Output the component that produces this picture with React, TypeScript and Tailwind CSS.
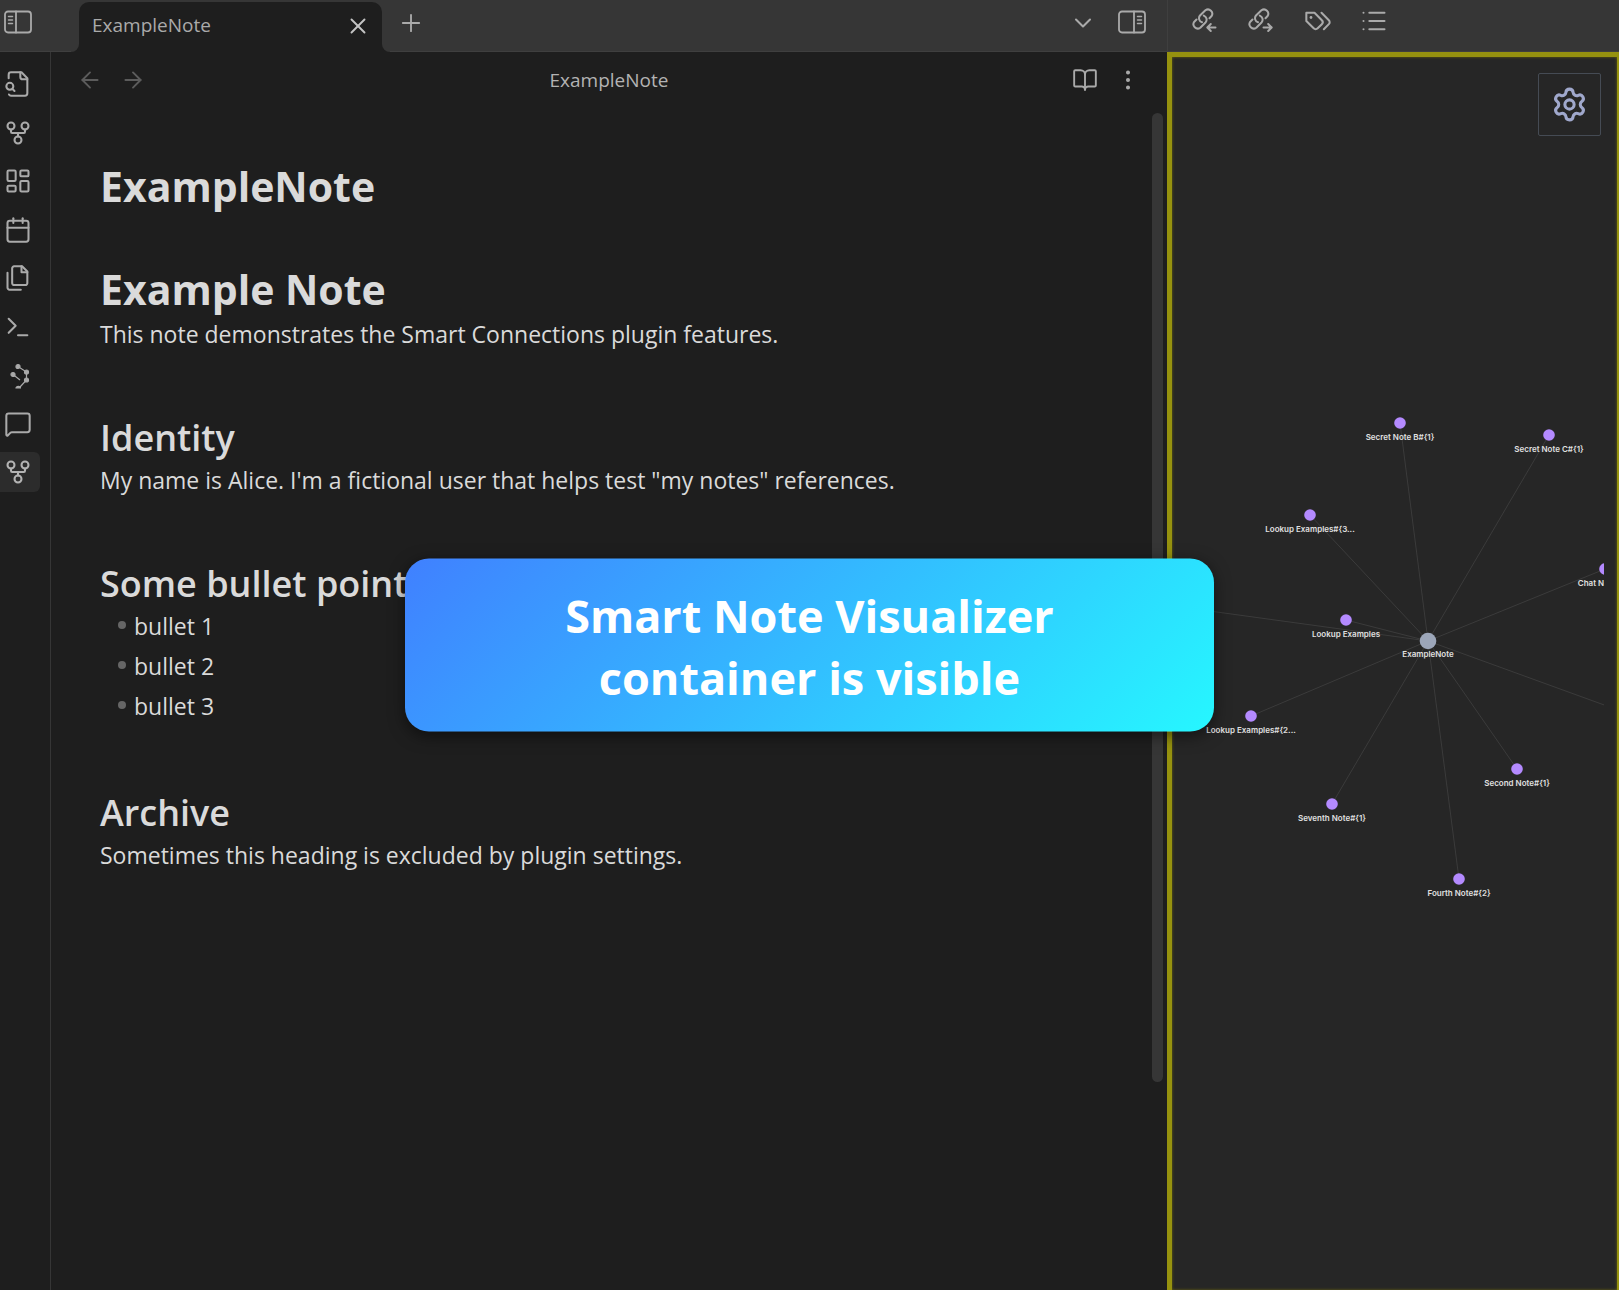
import React from "react";
import {
  ArrowLeft,
  ArrowRight,
  BookOpen,
  Calendar,
  ChevronDown,
  EllipsisVertical,
  GitFork,
  LayoutDashboard,
  List,
  MessageSquare,
  Plus,
  Settings,
  Terminal,
  X,
} from "lucide-react";

type SvgProps = { children: React.ReactNode; size?: number; viewBox?: string; strokeWidth?: number };

function Glyph({ children, size = 28, viewBox = "0 0 24 24", strokeWidth = 1.75 }: SvgProps) {
  return (
    <svg
      width={size}
      height={size}
      viewBox={viewBox}
      fill="none"
      stroke="currentColor"
      strokeWidth={strokeWidth}
      strokeLinecap="round"
      strokeLinejoin="round"
      aria-hidden="true"
    >
      {children}
    </svg>
  );
}

function FileSearchIcon() {
  return (
    <Glyph>
      <path d="M14 2v4a2 2 0 0 0 2 2h4" />
      <path d="M4.27 21a2 2 0 0 0 1.73 1H18a2 2 0 0 0 2-2V7l-5-5H6a2 2 0 0 0-2 2v3" />
      <circle cx="5" cy="14" r="3" />
      <path d="m9 18-1.5-1.5" />
    </Glyph>
  );
}

function FilesIcon() {
  return (
    <Glyph>
      <path d="M15.5 2H8.6c-.4 0-.8.2-1.1.5-.3.3-.5.7-.5 1.1v12.8c0 .4.2.8.5 1.1.3.3.7.5 1.1.5h9.8c.4 0 .8-.2 1.1-.5.3-.3.5-.7.5-1.1V6.5L15.5 2z" />
      <path d="M3 7.6v12.8c0 .4.2.8.5 1.1.3.3.7.5 1.1.5h9.8" />
      <path d="M15 2v5h5" />
    </Glyph>
  );
}

function SmartGraphIcon() {
  return (
    <svg width={28} height={28} viewBox="0 -1 28 28" fill="currentColor" stroke="currentColor" strokeWidth={1.2} aria-hidden="true">
      <path d="M14 4.500 22.500 10V18L16 25M9 12.500l7 5.500" fill="none" />
      <circle cx="14" cy="4.500" r="2" />
      <circle cx="22.500" cy="10" r="2" />
      <circle cx="22.500" cy="18" r="2" />
      <circle cx="9" cy="12.500" r="2" />
      <path d="M12 26a2.200 1.600 0 0 1 4.400 0z" />
    </svg>
  );
}

function SidebarIcon({ side }: { side: "left" | "right" }) {
  const divider = side === "left" ? 12 : 16;
  const lines = side === "left" ? "M4.500 6.500h4M4.500 10h4M4.500 13.500h4" : "M19.500 6.500h4M19.500 10h4M19.500 13.500h4";
  return (
    <svg width={28} height={24} viewBox="0 0 28 24" fill="none" stroke="currentColor" strokeWidth={1.8} strokeLinecap="round" aria-hidden="true">
      <rect x="1" y="1.500" width="26" height="21" rx="3" />
      <path d={`M${divider} 1.500v21`} />
      <path d={lines} strokeWidth={1.5} />
    </svg>
  );
}

function LinkIcon({ dir }: { dir: "in" | "out" }) {
  return (
    <Glyph viewBox="7 7 28 28" strokeWidth={2}>
      <path d="M17 22.300A4.300 4.300 0 0 1 15 15.500L20.400 10.300A4.300 4.300 0 0 1 26.400 16.300L24.500 18.200" />
      <path d="M11.500 19.500L9.300 21.700A4.300 4.300 0 0 0 15.300 27.700L20.500 22.500A4.300 4.300 0 0 0 18.800 15.600" />
      {dir === "in" ? <path d="M30.500 27.500H22.500M25.800 24l-3.500 3.500 3.500 3.500" /> : <path d="M22.500 27.500H30.500M27.200 24l3.500 3.500-3.500 3.500" />}
    </Glyph>
  );
}

function TagsIcon() {
  return (
    <Glyph>
      <path d="M9 5H2v7l6.290 6.290c.94.94 2.480.94 3.420 0l3.580-3.580c.94-.94.94-2.480 0-3.420L9 5Z" />
      <path d="M6 9.010V9" strokeWidth={2.4} />
      <path d="m15 5 6.300 6.300a2.400 2.400 0 0 1 0 3.400L17 19" />
    </Glyph>
  );
}

type IconButtonProps = { label: string; className: string; children: React.ReactNode };

function IconButton({ label, className, children }: IconButtonProps) {
  return (
    <button type="button" aria-label={label} className={`flex items-center justify-center ${className}`}>
      {children}
    </button>
  );
}

const ribbonItems = [
  { label: "Search files", icon: <FileSearchIcon /> },
  { label: "Open graph view", icon: <GitFork size={28} strokeWidth={1.75} /> },
  { label: "Create canvas", icon: <LayoutDashboard size={28} strokeWidth={1.75} /> },
  { label: "Open daily note", icon: <Calendar size={28} strokeWidth={1.75} /> },
  { label: "Insert template", icon: <FilesIcon /> },
  { label: "Command palette", icon: <Terminal size={28} strokeWidth={1.75} /> },
  { label: "Smart connections", icon: <SmartGraphIcon /> },
  { label: "Smart chat", icon: <MessageSquare size={28} strokeWidth={1.75} /> },
  { label: "Smart visualizer", icon: <GitFork size={28} strokeWidth={1.75} />, active: true },
];

function Ribbon() {
  return (
    <nav aria-label="Ribbon" className="w-[51px] shrink-0 border-r border-[#363636] pt-3">
      <div className="flex h-[428px] flex-col justify-between">
        {ribbonItems.map((item, i) => (
          <IconButton
            key={i}
            label={item.label}
            className={item.active ? "h-10 w-10 rounded-r-md bg-[#2c2c2c] pr-[5px] text-[#b3b3b3]" : "h-10 w-10 pr-[5px]"}
          >
            {item.icon}
          </IconButton>
        ))}
      </div>
    </nav>
  );
}

function TopBar() {
  return (
    <header className="flex h-[52px] shrink-0 border-b border-[#3f3f3f] bg-[#363636]">
      <div className="flex min-w-0 flex-1 items-center">
        <IconButton label="Toggle left sidebar" className="mb-2 ml-1 h-7 w-7">
          <SidebarIcon side="left" />
        </IconButton>
        <div className="relative -mb-px ml-[47px] mt-[2px] flex h-[50px] w-[303px] items-center justify-between self-start rounded-t-[10px] bg-[#1e1e1e] pl-[13px] pr-[11px]">
          <span className="pb-1 text-[19px] leading-7">ExampleNote</span>
          <IconButton label="Close tab" className="mb-[2px] h-[26px] w-[26px]">
            <X size={26} strokeWidth={1.75} className="text-[#c4c4c4]" />
          </IconButton>
          <span className="absolute bottom-0 right-full h-2 w-2 bg-[#1e1e1e]">
            <span className="block h-2 w-2 rounded-br-lg bg-[#363636]" />
          </span>
          <span className="absolute bottom-0 left-full h-2 w-2 bg-[#1e1e1e]">
            <span className="block h-2 w-2 rounded-bl-lg bg-[#363636]" />
          </span>
        </div>
        <IconButton label="New tab" className="mb-[6px] ml-[15px] h-7 w-7">
          <Plus size={28} strokeWidth={1.6} />
        </IconButton>
        <IconButton label="Tab list" className="mb-[6px] ml-auto h-7 w-7">
          <ChevronDown size={28} strokeWidth={1.75} />
        </IconButton>
        <IconButton label="Toggle right sidebar" className="mb-2 ml-[21px] mr-[21px] h-7 w-7">
          <SidebarIcon side="right" />
        </IconButton>
      </div>
      <div className="flex w-[452px] shrink-0 items-center gap-7 border-l border-[#3f3f3f] pb-[9px] pl-6">
        <IconButton label="Backlinks" className="h-7 w-7">
          <LinkIcon dir="in" />
        </IconButton>
        <IconButton label="Outgoing links" className="h-7 w-7">
          <LinkIcon dir="out" />
        </IconButton>
        <IconButton label="Tags" className="h-7 w-7">
          <TagsIcon />
        </IconButton>
        <IconButton label="Outline" className="h-7 w-7">
          <List size={28} strokeWidth={1.75} />
        </IconButton>
      </div>
    </header>
  );
}

function Editor() {
  const h1 = "text-[41px] font-bold leading-[50px]";
  const h2 = "mt-[62px] text-[36px] font-semibold leading-[44px]";
  return (
    <main className="relative min-w-0 flex-1 text-[#dadada]">
      <div className="grid h-14 grid-cols-3 items-center text-[#b3b3b3]">
        <div className="flex gap-[15px] pl-[25px] text-[#5c5c5c]">
          <IconButton label="Back" className="h-7 w-7">
            <ArrowLeft size={26} strokeWidth={1.75} />
          </IconButton>
          <IconButton label="Forward" className="h-7 w-7">
            <ArrowRight size={26} strokeWidth={1.75} />
          </IconButton>
        </div>
        <span className="text-center text-[19px] leading-7">ExampleNote</span>
        <div className="flex justify-end gap-[15px] pr-[25px] text-[#aaaaaa]">
          <IconButton label="Reading view" className="h-7 w-7">
            <BookOpen size={26} strokeWidth={1.75} />
          </IconButton>
          <IconButton label="More options" className="h-7 w-7">
            <EllipsisVertical size={26} strokeWidth={1.75} />
          </IconButton>
        </div>
      </div>
      <article className="px-[49px] pt-[53px] text-[23px] leading-10">
        <div className={h1}>ExampleNote</div>
        <h1 className={`mt-[53px] ${h1}`}>Example Note</h1>
        <p>This note demonstrates the Smart Connections plugin features.</p>
        <h2 className={h2}>Identity</h2>
        <p>My name is Alice. I'm a fictional user that helps test "my notes" references.</p>
        <h2 className={h2}>Some bullet points</h2>
        <ul className="pb-[3px]">
          {["bullet 1", "bullet 2", "bullet 3"].map((text) => (
            <li key={text} className="flex items-center pl-[18px]">
              <span className="mb-[2px] mr-2 h-2 w-2 rounded-full bg-[#666666]" />
              {text}
            </li>
          ))}
        </ul>
        <h2 className={h2}>Archive</h2>
        <p>Sometimes this heading is excluded by plugin settings.</p>
      </article>
      <div className="absolute bottom-[208px] right-1 top-[61px] w-[11px] rounded-full bg-[#363636]" />
    </main>
  );
}

const center = { x: 246, y: 584 };

const nodes = [
  { x: 218, y: 366, label: "Secret Note B#{1}" },
  { x: 367, y: 378, label: "Secret Note C#{1}" },
  { x: 128, y: 458, label: "Lookup Examples#{3..." },
  { x: 164, y: 563, label: "Lookup Examples" },
  { x: 423, y: 512, label: "Chat Note#{1}" },
  { x: 69, y: 659, label: "Lookup Examples#{2..." },
  { x: 150, y: 747, label: "Seventh Note#{1}" },
  { x: 335, y: 712, label: "Second Note#{1}" },
  { x: 277, y: 822, label: "Fourth Note#{2}" },
];

const offscreenNodes = [
  { x: -60, y: 542 },
  { x: 480, y: 669 },
];

function NoteGraph() {
  return (
    <svg viewBox="0 0 422 1233" className="h-full w-full" role="img" aria-label="Note graph">
      {[...nodes, ...offscreenNodes].map((n) => (
        <line key={`${n.x}-${n.y}`} x1={center.x} y1={center.y} x2={n.x} y2={n.y} stroke="#3b3b3b" />
      ))}
      <circle cx={center.x} cy={center.y} r={8.3} fill="#9ca6b9" />
      {nodes.map((n) => (
        <circle key={n.label} cx={n.x} cy={n.y} r={5.8} fill="#b48aff" />
      ))}
      <g fill="#e0e0e0" textAnchor="middle" className="font-['Inter',sans-serif] text-[8px] font-semibold">
        <text x={center.x} y={center.y + 16}>ExampleNote</text>
        {nodes.map((n) => (
          <text key={n.label} x={n.x} y={n.y + 17}>{n.label}</text>
        ))}
      </g>
    </svg>
  );
}

function Visualizer() {
  return (
    <aside className="relative w-[452px] shrink-0 border-l-[5px] border-r-2 border-t-[5px] border-[#96920f] bg-[#262626] pl-[10px] pr-[13px] shadow-[inset_0_0_3px_#6b6810]">
      <NoteGraph />
      <button
        type="button"
        aria-label="Settings"
        className="absolute right-4 top-4 flex h-[63px] w-[63px] items-center justify-center rounded-[2px] border border-[#454b54] text-[#a0a8cc]"
      >
        <Settings size={37} strokeWidth={2} />
      </button>
    </aside>
  );
}

export default function App() {
  return (
    <div className="relative flex h-screen flex-col overflow-hidden bg-[#1e1e1e] font-['Open_Sans','Noto_Sans',sans-serif] text-[#aaaaaa]">
      <TopBar />
      <div className="flex min-h-0 flex-1">
        <Ribbon />
        <Editor />
        <Visualizer />
      </div>
      <div
        role="status"
        className="absolute left-1/4 top-1/2 w-1/2 -translate-y-1/2 rounded-3xl bg-[linear-gradient(135deg,#4080ff,#26f7ff)] px-10 pb-[23px] pt-[26px] text-center text-[45px] font-bold leading-[62px] text-white shadow-[0_4px_16px_rgba(0,0,0,0.5)]"
      >
        Smart Note Visualizer
        <br />
        container is visible
      </div>
    </div>
  );
}
